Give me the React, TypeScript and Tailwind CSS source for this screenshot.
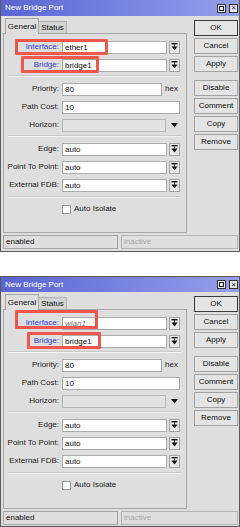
import React from 'react';

// small "drop down" button glyph: bar + stem + arrow
const DropBtn = () => (
  <div className="ml-[2px] flex h-[13px] w-[11px] items-center justify-center border border-[#a4a4a4] bg-[#e8e8e8]">
    <svg width="7" height="8" viewBox="0 0 7 8">
      <rect x="0.5" y="0" width="6" height="1.4" fill="#111" />
      <rect x="3" y="1.4" width="1" height="2.2" fill="#111" />
      <path d="M0.5 3.6h6L3.5 7.6z" fill="#111" />
    </svg>
  </div>
);

interface RowProps {
  label: string;
  blue?: boolean;
  children: React.ReactNode;
}

const Row: React.FC<RowProps> = ({ label, blue, children }) => (
  <div className="flex h-[18px] items-center">
    <div className={`w-[55px] text-right ${blue ? 'text-[#2f40de]' : 'text-[#222]'}`}>{label}</div>
    <div className="ml-[3px] flex items-center">{children}</div>
  </div>
);

const Field = ({ value, w, muted }: { value?: string; w: string; muted?: boolean }) => (
  <div className={`h-[13px] ${w} border border-[#ababab] bg-white px-[2px] leading-[11px] ${muted ? 'italic text-[#767676]' : 'text-[#111]'}`}>
    {value}
  </div>
);

const Sep = ({ mt }: { mt: string }) => (
  <div className={`${mt} mb-[3px] ml-[4px] mr-[5px] h-[2px] border-t border-[#c9c9c9] border-b border-b-[#f4f4f4]`} />
);

const Btn = ({ label, main }: { label: string; main?: boolean }) => (
  <div
    className={`flex h-[16px] items-center justify-center bg-[#e4e4e4] text-[#111] ${
      main ? 'border border-[#3c3c3c]' : 'border border-[#a2a2a2]'
    }`}
  >
    {label}
  </div>
);

interface Box {
  left: string;
  top: string;
  w: string;
  h: string;
}

interface WindowProps {
  top?: boolean;
  iface: string;
  ifaceMuted?: boolean;
  boxA: Box;
  boxB: Box;
}

const BridgeWindow: React.FC<WindowProps> = ({ top, iface, ifaceMuted, boxA, boxB }) => (
  <div
    className={`relative w-[240px] border-x border-b border-[#5a5a5a] bg-[#dedede] ${
      top ? 'h-[252px]' : 'h-[251px] border-t'
    }`}
  >
    {/* title bar */}
    <div
      className={`flex items-center justify-between bg-gradient-to-r from-[#5a65d4] to-[#959fea] pl-[4px] pr-[1px] ${
        top ? 'h-[16px]' : 'h-[15px]'
      }`}
    >
      <span className="text-white">New Bridge Port</span>
      <div className="flex gap-[3px]">
        <div className="flex h-[9px] w-[9px] items-center justify-center border border-[#333] bg-[#e6e6e6]">
          <div className="h-[5px] w-[5px] border border-[#222]" />
        </div>
        <div className="flex h-[9px] w-[9px] items-center justify-center border border-[#333] bg-[#e6e6e6] text-[8px] leading-none text-[#111]">
          ×
        </div>
      </div>
    </div>

    <div className="flex">
      {/* left side: tabs + panel */}
      <div className="ml-[2px] w-[184px]">
        <div className="mt-[2px] flex h-[15px] items-end pl-[2px]">
          <div className="relative z-10 -mb-px flex h-[16px] w-[34px] items-center justify-center border-x border-t border-[#a8a8a8] bg-[#dedede] text-[#111]">
            General
          </div>
          <div className="flex h-[12px] w-[28px] items-center justify-center border-r border-t border-[#b0b0b0] bg-[#d3d3d3] text-[#111]">
            Status
          </div>
        </div>
        <div className="h-[200px] border border-[#a8a8a8] pt-[4px]">
          <Row label="Interface:" blue>
            <Field value={iface} w="w-[105px]" muted={ifaceMuted} />
            <DropBtn />
          </Row>
          <Row label="Bridge:" blue>
            <Field value="bridge1" w="w-[105px]" />
            <DropBtn />
          </Row>
          <Sep mt="mt-[1px]" />
          <Row label="Priority:">
            <Field value="80" w="w-[100px]" />
            <span className="ml-[3px] text-[#222]">hex</span>
          </Row>
          <Row label="Path Cost:">
            <Field value="10" w="w-[118px]" />
          </Row>
          <Row label="Horizon:">
            <div className="h-[13px] w-[104px] border border-[#b8b8b8] bg-[#e2e2e2]" />
            <svg className="ml-[5px]" width="7" height="5" viewBox="0 0 7 5">
              <path d="M0 0h7L3.5 4.5z" fill="#111" />
            </svg>
          </Row>
          <Sep mt="mt-[1px]" />
          <Row label="Edge:">
            <Field value="auto" w="w-[105px]" />
            <DropBtn />
          </Row>
          <Row label="Point To Point:">
            <Field value="auto" w="w-[105px]" />
            <DropBtn />
          </Row>
          <Row label="External FDB:">
            <Field value="auto" w="w-[105px]" />
            <DropBtn />
          </Row>
          <Sep mt="mt-[2px]" />
          <div className="flex h-[16px] items-center pl-[58px]">
            <div className="h-[9px] w-[9px] border border-[#9a9a9a] bg-white" />
            <span className="ml-[3px] text-[#222]">Auto Isolate</span>
          </div>
        </div>
      </div>

      {/* right side: buttons */}
      <div className="ml-[7px] mt-[4px] flex w-[44px] flex-col">
        <div className="flex flex-col gap-[2px]">
          <Btn label="OK" main />
          <Btn label="Cancel" />
          <Btn label="Apply" />
        </div>
        <div className="mt-[8px] flex flex-col gap-[2px]">
          <Btn label="Disable" />
          <Btn label="Comment" />
          <Btn label="Copy" />
          <Btn label="Remove" />
        </div>
      </div>
    </div>

    {/* status bar */}
    <div className="mt-[2px] flex gap-[3px] pl-[2px] pr-[1px]">
      <div className="flex h-[14px] w-[115px] items-center border border-[#a4a4a4] pl-[2px] text-[#111]">enabled</div>
      <div className="flex h-[14px] flex-1 items-center border border-[#b4b4b4] pl-[2px] text-[#ababab]">inactive</div>
    </div>

    {/* red annotation boxes */}
    <div
      className={`pointer-events-none absolute rounded-[1px] border-[3px] border-[#f1574c] ${boxA.left} ${boxA.top} ${boxA.w} ${boxA.h}`}
    />
    <div
      className={`pointer-events-none absolute rounded-[1px] border-[3px] border-[#f1574c] ${boxB.left} ${boxB.top} ${boxB.w} ${boxB.h}`}
    />
  </div>
);

export default function App() {
  return (
    <div className="w-[240px] bg-white font-['Liberation_Sans','DejaVu_Sans',sans-serif] text-[8px] leading-none">
      <BridgeWindow
        top
        iface="ether1"
        boxA={{ left: 'left-[14px]', top: 'top-[39px]', w: 'w-[93px]', h: 'h-[16px]' }}
        boxB={{ left: 'left-[20px]', top: 'top-[56px]', w: 'w-[78px]', h: 'h-[17px]' }}
      />
      <div className="h-[24px]" />
      <BridgeWindow
        iface="wlan1"
        ifaceMuted
        boxA={{ left: 'left-[14px]', top: 'top-[33px]', w: 'w-[83px]', h: 'h-[19px]' }}
        boxB={{ left: 'left-[26px]', top: 'top-[55px]', w: 'w-[74px]', h: 'h-[17px]' }}
      />
    </div>
  );
}
